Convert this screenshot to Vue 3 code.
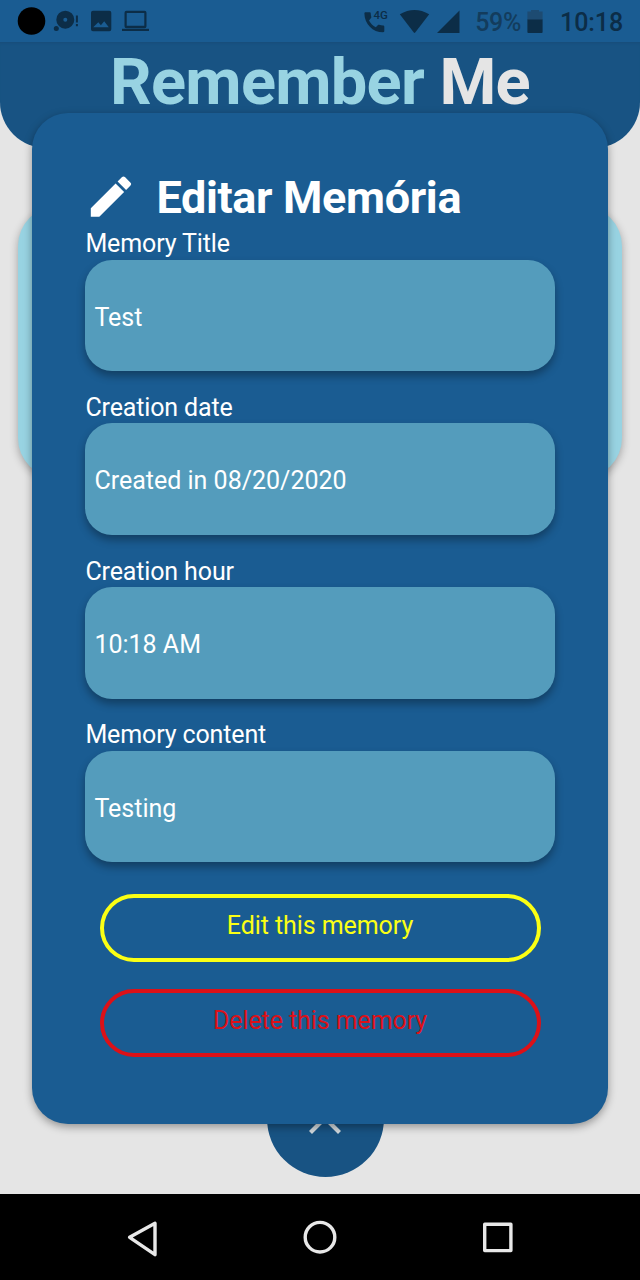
<script setup>
const fields = [
  { label: 'Memory Title', value: 'Test' },
  { label: 'Creation date', value: 'Created in 08/20/2020' },
  { label: 'Creation hour', value: '10:18 AM' },
  { label: 'Memory content', value: 'Testing' },
]
</script>

<template>
  <div class="screen">
    <div class="status">
      <svg class="left-icons" width="160" height="42" viewBox="0 0 160 42">
        <circle cx="31.5" cy="21" r="13.8" fill="#000" />
        <g fill="#0c2d47">
          <path fill-rule="evenodd" d="M65.300 10.700a9 9 0 1 1 0 18a9 9 0 1 1 0-18zM65.300 17.700a2 2 0 1 0 0 4a2 2 0 1 0 0-4z" />
          <circle cx="56.300" cy="28.500" r="2.500" />
          <path d="M75.900 15.500h2v7h-2zM75.900 24h2v2.200h-2z" />
          <path fill-rule="evenodd" d="M93 10.700h16.300a2 2 0 0 1 2 2v16.600a2 2 0 0 1-2 2H93a2 2 0 0 1-2-2V12.700a2 2 0 0 1 2-2zM93.200 27.300h15.600l-4.600-6-3.300 4-2.600-3z" />
          <path fill-rule="evenodd" d="M126.500 10.700h18a2 2 0 0 1 2 2v13.600a2 2 0 0 1-2 2h-18a2 2 0 0 1-2-2V12.700a2 2 0 0 1 2-2zM126.700 12.900v12.800h17.600V12.900z" />
          <path d="M122 28.800h27v2.200h-27z" />
        </g>
      </svg>
      <div class="status-right">
        <svg width="100" height="42" viewBox="360 0 100 42" fill="#0c2d47">
          <path d="M364.600 12.200h4.200c.5 0 .9.400.9.900 0 1.400.2 2.800.6 4 .1.400 0 .8-.3 1l-2 2.300c1.500 3 3.900 5.200 6.800 6.800l2.200-2.200c.3-.3.700-.4 1.100-.2 1.300.4 2.600.6 4 .6.600 0 1.200.5 1.200 1.100v4.600c0 .8-.5 1.200-1.200 1.200-10.300 0-18.700-8.600-18.700-18.900 0-.7.500-1.200 1.200-1.200z" />
          <text x="372.500" y="18.600" class="net">4G</text>
          <path d="M398.800 14.300Q413.500 5.800 428.200 14.300L414.200 32.500q-.7.800-1.400 0z" />
          <path d="M458.500 10.500v22.400H436z" />
        </svg>
        <span class="percent">59%</span>
        <svg class="battery" width="16" height="24" viewBox="0 0 16 24">
          <path fill="#1d4b72" d="M4 1h8v1.500h3.600V11H.4V2.500H4z" />
          <path fill="#0c2d47" d="M.4 10.500h15.200V23a1 1 0 0 1-1 1H1.400a1 1 0 0 1-1-1z" />
        </svg>
        <span class="clock">10:18</span>
      </div>
    </div>

    <header class="header"><h1><span>Remember</span> Me</h1></header>
    <div class="memory-card"></div>
    <div class="fab">
      <svg width="36" height="22" viewBox="0 0 36 22"><path d="M3.500 19.500L18 5l14.500 14.500" fill="none" stroke="#d3dade" stroke-width="4.200" /></svg>
    </div>

    <section class="modal">
      <h2>
        <svg width="42" height="42" viewBox="0 0 42 42" fill="#fff">
          <path d="M.8 32.300 25.600 7.500l8.500 8.500L9.300 40.800H.8zM27.600 5.500l4.200-4.200a2.400 2.400 0 0 1 3.400 0l5.100 5.100a2.400 2.400 0 0 1 0 3.400L36.100 14z" />
        </svg>
        <span>Editar Memória</span>
      </h2>
      <div v-for="f in fields" :key="f.label" class="group">
        <label>{{ f.label }}</label>
        <div class="field">{{ f.value }}</div>
      </div>
      <button class="edit">Edit this memory</button>
      <button class="delete">Delete this memory</button>
    </section>

    <nav class="navbar">
      <svg width="440" height="86" viewBox="100 0 440 86" fill="none" stroke="#e8e8e8" stroke-width="3.400" stroke-linejoin="round">
        <path d="M155 29.300v31.400L129.600 43.300z" />
        <circle cx="320" cy="43.200" r="14.800" />
        <path d="M484.700 30.200h26.200v26.400h-26.200z" />
      </svg>
    </nav>
  </div>
</template>

<style>
body { margin: 0; }
</style>

<style scoped>
.screen {
  position: relative;
  width: 640px;
  height: 1280px;
  overflow: hidden;
  background: #e5e5e5;
  font-family: Roboto, sans-serif;
  display: flex;
  flex-direction: column;
}
.status {
  height: 42px;
  flex: none;
  display: flex;
  justify-content: space-between;
  background: #1a5c92;
  color: #0c2d47;
}
.left-icons { display: block; }
.status-right {
  display: flex;
  align-items: center;
  padding-right: 17px;
  font-weight: 500;
}
.net { font: 500 11.500px Roboto, sans-serif; }
.percent { font-size: 25px; color: #133c5d; margin: 3px 0 0 14px; font-weight: 500; letter-spacing: -0.3px; }
.battery { margin: 0 17px 0 6px; }
.clock { font-size: 25px; margin-top: 3px; letter-spacing: -0.1px; }
.header {
  height: 106px;
  flex: none;
  background: #185383;
  border-radius: 0 0 46px 46px;
  box-shadow: inset 0 3px 3px -2px #184d79;
}
h1 {
  margin: 0;
  padding-top: 2px;
  text-align: center;
  font-size: 65px;
  line-height: 76px;
  font-weight: 700;
  letter-spacing: -0.750px;
  color: #e5e5e5;
  white-space: nowrap;
}
h1 span { color: #98d3e2; }
.memory-card {
  flex: none;
  height: 272px;
  margin: 58px 18px 0;
  border-radius: 40px;
  background: #98d3e2;
  box-shadow: 0 3px 8px rgba(0, 0, 0, 0.3);
}
.fab {
  flex: none;
  width: 117px;
  height: 117px;
  margin: 582px 0 0 267px;
  border-radius: 50%;
  background: #185383;
  display: flex;
  align-items: center;
  justify-content: center;
}
.fab svg { margin: 11px 1px 0 0; }
.modal {
  position: absolute;
  left: 32px;
  top: 113px;
  width: 576px;
  height: 1011px;
  box-sizing: border-box;
  padding: 58px 53.400px 0;
  border-radius: 36px;
  background: #1a5c92;
  box-shadow: 0 3px 9px rgba(0, 0, 0, 0.36);
  color: #fff;
  display: flex;
  flex-direction: column;
}
h2 {
  margin: 0;
  height: 58.400px;
  display: flex;
  padding-left: 4px;
  font-size: 45px;
  line-height: 53px;
  font-weight: 700;
  letter-spacing: -0.350px;
  white-space: nowrap;
}
h2 svg { margin: 5px 24px 0 1px; flex: none; }
.group { height: 163.600px; flex: none; font-size: 25px; }
label { display: block; height: 30.500px; line-height: 29px; letter-spacing: -0.130px; }
.field {
  height: 111.500px;
  box-sizing: border-box;
  padding: 1px 9px 0;
  border-radius: 27px;
  background: #549cbc;
  box-shadow: 0 5px 8px rgba(0, 0, 0, 0.32);
  line-height: 113px;
}
button {
  flex: none;
  width: 441px;
  height: 67.500px;
  margin: 10.500px auto 0;
  padding: 0 0 6px;
  border: 4px solid;
  border-radius: 34px;
  background: none;
  font: 400 25px Roboto, sans-serif;
  letter-spacing: -0.080px;
}
.edit { color: #fbff14; margin-top: 10.500px; }
.delete { color: #dc1118; margin-top: 27.500px; }
.navbar {
  position: absolute;
  left: 0;
  top: 1194px;
  width: 640px;
  height: 86px;
  background: #000;
  display: flex;
  justify-content: center;
}
</style>
